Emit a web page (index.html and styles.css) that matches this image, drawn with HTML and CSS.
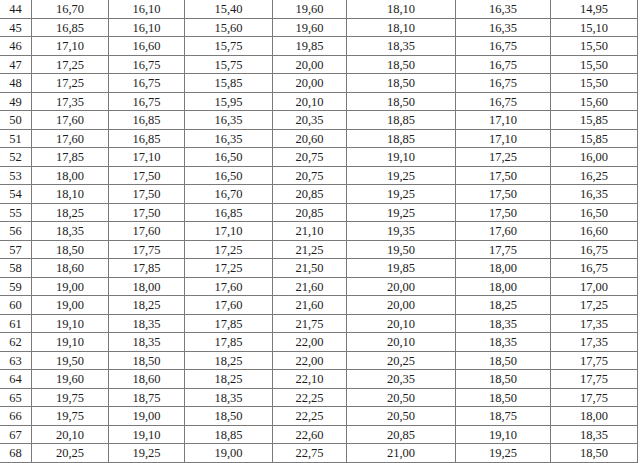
FILE: index.html
```html
<!DOCTYPE html>
<html>
<head>
<meta charset="utf-8">
<link rel="stylesheet" href="styles.css">
</head>
<body>
<table class="grid">
<colgroup>
<col class="c0"><col class="c1"><col class="c2"><col class="c3"><col class="c4"><col class="c5"><col class="c6"><col class="c7">
</colgroup>
<tbody>
<tr><td>44</td><td>16,70</td><td>16,10</td><td>15,40</td><td>19,60</td><td>18,10</td><td>16,35</td><td>14,95</td></tr>
<tr><td>45</td><td>16,85</td><td>16,10</td><td>15,60</td><td>19,60</td><td>18,10</td><td>16,35</td><td>15,10</td></tr>
<tr><td>46</td><td>17,10</td><td>16,60</td><td>15,75</td><td>19,85</td><td>18,35</td><td>16,75</td><td>15,50</td></tr>
<tr><td>47</td><td>17,25</td><td>16,75</td><td>15,75</td><td>20,00</td><td>18,50</td><td>16,75</td><td>15,50</td></tr>
<tr><td>48</td><td>17,25</td><td>16,75</td><td>15,85</td><td>20,00</td><td>18,50</td><td>16,75</td><td>15,50</td></tr>
<tr><td>49</td><td>17,35</td><td>16,75</td><td>15,95</td><td>20,10</td><td>18,50</td><td>16,75</td><td>15,60</td></tr>
<tr><td>50</td><td>17,60</td><td>16,85</td><td>16,35</td><td>20,35</td><td>18,85</td><td>17,10</td><td>15,85</td></tr>
<tr><td>51</td><td>17,60</td><td>16,85</td><td>16,35</td><td>20,60</td><td>18,85</td><td>17,10</td><td>15,85</td></tr>
<tr><td>52</td><td>17,85</td><td>17,10</td><td>16,50</td><td>20,75</td><td>19,10</td><td>17,25</td><td>16,00</td></tr>
<tr><td>53</td><td>18,00</td><td>17,50</td><td>16,50</td><td>20,75</td><td>19,25</td><td>17,50</td><td>16,25</td></tr>
<tr><td>54</td><td>18,10</td><td>17,50</td><td>16,70</td><td>20,85</td><td>19,25</td><td>17,50</td><td>16,35</td></tr>
<tr><td>55</td><td>18,25</td><td>17,50</td><td>16,85</td><td>20,85</td><td>19,25</td><td>17,50</td><td>16,50</td></tr>
<tr><td>56</td><td>18,35</td><td>17,60</td><td>17,10</td><td>21,10</td><td>19,35</td><td>17,60</td><td>16,60</td></tr>
<tr><td>57</td><td>18,50</td><td>17,75</td><td>17,25</td><td>21,25</td><td>19,50</td><td>17,75</td><td>16,75</td></tr>
<tr><td>58</td><td>18,60</td><td>17,85</td><td>17,25</td><td>21,50</td><td>19,85</td><td>18,00</td><td>16,75</td></tr>
<tr><td>59</td><td>19,00</td><td>18,00</td><td>17,60</td><td>21,60</td><td>20,00</td><td>18,00</td><td>17,00</td></tr>
<tr><td>60</td><td>19,00</td><td>18,25</td><td>17,60</td><td>21,60</td><td>20,00</td><td>18,25</td><td>17,25</td></tr>
<tr><td>61</td><td>19,10</td><td>18,35</td><td>17,85</td><td>21,75</td><td>20,10</td><td>18,35</td><td>17,35</td></tr>
<tr><td>62</td><td>19,10</td><td>18,35</td><td>17,85</td><td>22,00</td><td>20,10</td><td>18,35</td><td>17,35</td></tr>
<tr><td>63</td><td>19,50</td><td>18,50</td><td>18,25</td><td>22,00</td><td>20,25</td><td>18,50</td><td>17,75</td></tr>
<tr><td>64</td><td>19,60</td><td>18,60</td><td>18,25</td><td>22,10</td><td>20,35</td><td>18,50</td><td>17,75</td></tr>
<tr><td>65</td><td>19,75</td><td>18,75</td><td>18,35</td><td>22,25</td><td>20,50</td><td>18,50</td><td>17,75</td></tr>
<tr><td>66</td><td>19,75</td><td>19,00</td><td>18,50</td><td>22,25</td><td>20,50</td><td>18,75</td><td>18,00</td></tr>
<tr><td>67</td><td>20,10</td><td>19,10</td><td>18,85</td><td>22,60</td><td>20,85</td><td>19,10</td><td>18,35</td></tr>
<tr><td>68</td><td>20,25</td><td>19,25</td><td>19,00</td><td>22,75</td><td>21,00</td><td>19,25</td><td>18,50</td></tr>
</tbody>
</table>
</body>
</html>
```

FILE: styles.css
```css
html, body {
  margin: 0;
  padding: 0;
  background: #ffffff;
  overflow: hidden;
}

.grid {
  border-collapse: collapse;
  table-layout: fixed;
  width: 639px;
  margin: -1px 0 0 -1px;
  font-family: "Liberation Serif", "Times New Roman", serif;
  font-size: 12.5px;
  color: #1c1c1c;
}

.c0 { width: 32px; }
.c1 { width: 77px; }
.c2 { width: 76px; }
.c3 { width: 88px; }
.c4 { width: 74px; }
.c5 { width: 109px; }
.c6 { width: 95px; }
.c7 { width: 87px; }

.grid td {
  border: 1px solid #7a7a7a;
  height: 17.5px;
  padding: 0;
  text-align: center;
  vertical-align: bottom;
  line-height: 15.5px;
  white-space: nowrap;
}
```
